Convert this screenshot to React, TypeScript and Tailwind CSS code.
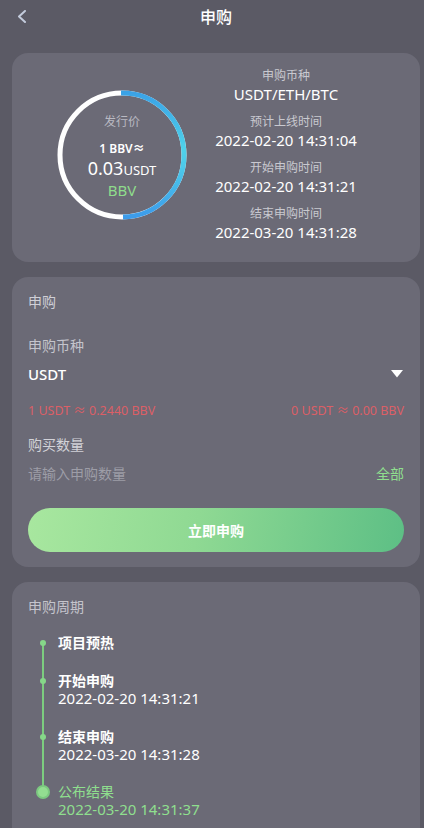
import React from "react";

const font = { fontFamily: '"Noto Sans", "Noto Sans CJK SC", sans-serif' };

function Ring() {
  return (
    <svg width="130" height="130" viewBox="0 0 130 130" className="block">
      <defs>
        <linearGradient id="bl" x1="0" y1="0" x2="0" y2="1">
          <stop offset="0" stopColor="#3aa2e6" />
          <stop offset="0.45" stopColor="#4fd2ea" />
          <stop offset="0.6" stopColor="#4cc9ea" />
          <stop offset="1" stopColor="#3c9bea" />
        </linearGradient>
      </defs>
      <circle cx="65" cy="65" r="62" fill="none" stroke="#ffffff" strokeWidth="5" />
      <path d="M 64 3 A 62 62 0 0 1 66 127" fill="none" stroke="url(#bl)" strokeWidth="5" />
    </svg>
  );
}

function InfoBlock({ label, value, first }: { label: string; value: string; first?: boolean }) {
  return (
    <div className={first ? "" : "mt-[10px]"}>
      <div className="text-[12px] leading-[16px] text-[#c9c9d0]">{label}</div>
      <div className="text-[15px] leading-[20px] text-white whitespace-nowrap">{value}</div>
    </div>
  );
}

export default function App() {
  return (
    <div className="w-full min-h-[828px] bg-[#5b5a65] overflow-hidden" style={font}>
      <div className="w-[432px] px-3 pb-6">
        {/* header */}
        <div className="relative h-[34px] flex items-center justify-center">
          <svg className="absolute left-[5px] top-[10px]" width="10" height="13" viewBox="0 0 10 13">
            <polyline points="8,1 2,6.5 8,12" fill="none" stroke="#c3cbdc" strokeWidth="2" strokeLinecap="round" strokeLinejoin="round" />
          </svg>
          <div className="text-[16px] text-white font-medium">申购</div>
        </div>

        {/* card 1 */}
        <div className="mt-[19px] h-[209px] rounded-[16px] bg-[#6b6a76] flex items-start pl-[45px]">
          <div className="relative mt-[37px] w-[130px] h-[130px] shrink-0">
            <Ring />
            <div className="absolute inset-0 flex flex-col items-center">
              <div className="mt-[24px] text-[12px] leading-[16px] text-[#b9b9c2]">发行价</div>
              <div className="mt-[11px] text-[12px] leading-[16px] text-white font-semibold">1 BBV≈</div>
              <div className="leading-[22px] text-white">
                <span className="text-[18px]">0.03</span>
                <span className="text-[13px]">USDT</span>
              </div>
              <div className="text-[15px] leading-[18px] text-[#8fdc8c]">BBV</div>
            </div>
          </div>
          <div className="ml-[29px] mt-[15px] w-[140px] text-center flex flex-col items-center">
            <InfoBlock first label="申购币种" value="USDT/ETH/BTC" />
            <InfoBlock label="预计上线时间" value="2022-02-20 14:31:04" />
            <InfoBlock label="开始申购时间" value="2022-02-20 14:31:21" />
            <InfoBlock label="结束申购时间" value="2022-03-20 14:31:28" />
          </div>
        </div>

        {/* card 2 */}
        <div className="mt-[15px] rounded-[16px] bg-[#6b6a76] px-4 pt-[15px] pb-[15px]">
          <div className="text-[14px] leading-[20px] text-[#cfcfd6]">申购</div>
          <div className="mt-[24px] text-[14px] leading-[20px] text-[#c4c4cc]">申购币种</div>
          <div className="mt-[8px] flex items-center justify-between h-[20px]">
            <div className="text-[15px] leading-[20px] text-white font-medium">USDT</div>
            <svg width="12" height="8" viewBox="0 0 12 8" className="mr-[1px]">
              <polygon points="0,0 12,0 6,7.5" fill="#ffffff" />
            </svg>
          </div>
          <div className="mt-[18px] flex justify-between text-[12.5px] leading-[18px] text-[#dc5f66]">
            <span>1 USDT ≈ 0.2440 BBV</span>
            <span>0 USDT ≈ 0.00 BBV</span>
          </div>
          <div className="mt-[15px] text-[14px] leading-[20px] text-[#d2d2d8]">购买数量</div>
          <div className="mt-[9px] flex justify-between text-[14px] leading-[20px]">
            <span className="text-[#9d9da7]">请输入申购数量</span>
            <span className="text-[#8fdf8e]">全部</span>
          </div>
          <button className="mt-[24px] w-full h-[44px] rounded-full bg-[linear-gradient(100deg,#a8e79f_0%,#8fd993_45%,#5dbf85_100%)] text-white text-[14px] font-semibold">
            立即申购
          </button>
        </div>

        {/* card 3 */}
        <div className="mt-[15px] rounded-[16px] bg-[#6b6a76] px-4 pt-[15px] pb-[30px]">
          <div className="text-[14px] leading-[20px] text-[#c4c4cc]">申购周期</div>
          <div className="relative mt-[17px] pl-[30px]">
            <div className="absolute left-[14px] top-[9px] w-[2px] h-[152px] bg-[#7ccd7f]" />
            <div className="absolute left-[12px] top-[6px] w-[6px] h-[6px] rounded-full bg-[#86d789]" />
            <div className="absolute left-[12px] top-[44px] w-[6px] h-[6px] rounded-full bg-[#86d789]" />
            <div className="absolute left-[12px] top-[100px] w-[6px] h-[6px] rounded-full bg-[#86d789]" />
            <div className="absolute left-[8px] top-[151px] w-[14px] h-[14px] rounded-full bg-[#7cc980] flex items-center justify-center">
              <div className="w-[10px] h-[10px] rounded-full bg-[#93dd91]" />
            </div>

            <div className="text-[14px] leading-[17px] text-white font-semibold">项目预热</div>

            <div className="mt-[21px] text-[14px] leading-[17px] text-white font-semibold">开始申购</div>
            <div className="text-[15px] leading-[18px] text-white">2022-02-20 14:31:21</div>

            <div className="mt-[21px] text-[14px] leading-[17px] text-white font-semibold">结束申购</div>
            <div className="text-[15px] leading-[18px] text-white">2022-03-20 14:31:28</div>

            <div className="mt-[20px] text-[14px] leading-[17px] text-[#8fdf8e]">公布结果</div>
            <div className="text-[15px] leading-[18px] text-[#8fdf8e]">2022-03-20 14:31:37</div>
          </div>
        </div>
      </div>
    </div>
  );
}
